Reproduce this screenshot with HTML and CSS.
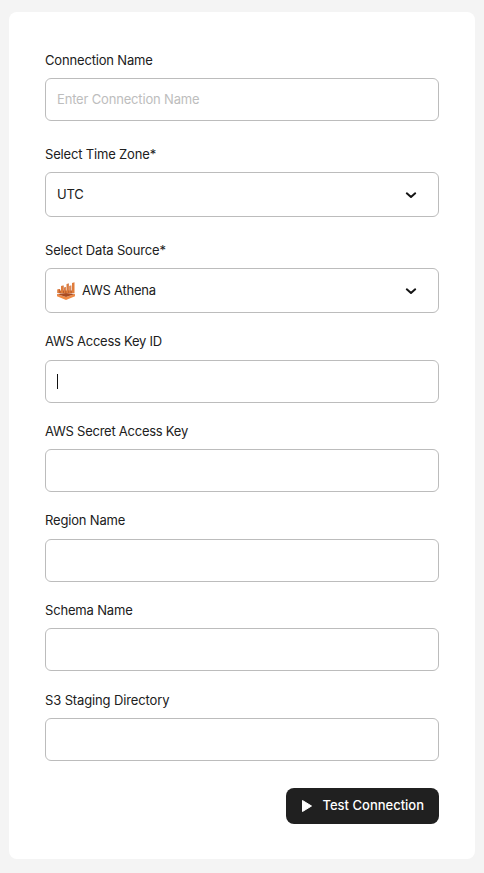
FILE: index.html
```html
<!DOCTYPE html>
<html lang="en">
<head>
<meta charset="utf-8">
<title>Connection</title>
<link rel="stylesheet" href="styles.css">
</head>
<body>
<form class="card">
  <div class="field name"><label>Connection Name</label><div class="control placeholder">Enter Connection Name</div></div>
  <div class="field zone"><label>Select Time Zone*</label><div class="control select"><span>UTC</span><svg class="chevron" viewBox="0 0 12 8"><path d="M1.8 2.3L6 6l4.2-3.7"/></svg></div></div>
  <div class="field source"><label>Select Data Source*</label><div class="control select"><svg class="athena" viewBox="0 0 18 18"><path fill="#f08a43" d="M0 12l9 3 9-3v2.2L9 18l-9-3.8z"/><path fill="#a94c22" d="M0 12l9-1 9 1-9 3z"/><path fill="#c96a31" d="M.5 7.5h2.5V11H.5zM3 8.5h12v2.8H3z"/><path fill="#e07c3a" d="M.5 7.5l2-.5v4h-2zM4 4l2-.5V11H4zM7 5.5L8.5 5v6H7zM9.5 2l2-.5V11h-2zM12.2 4l1.5-.5V11h-1.5zM15 1l2.5-.7v11L15 11z"/><path fill="#b85728" d="M2.5 7h.6v4h-.6zM6 3.5h.6V11H6zM8.5 5H9v6h-.5zM11.5 1.5h.5V11h-.5zM13.7 3.5h.6V11h-.6z"/></svg><span>AWS Athena</span><svg class="chevron" viewBox="0 0 12 8"><path d="M1.8 2.3L6 6l4.2-3.7"/></svg></div></div>
  <div class="field key"><label>AWS Access Key ID</label><div class="control"><span class="caret"></span></div></div>
  <div class="field secret"><label>AWS Secret Access Key</label><div class="control"></div></div>
  <div class="field region"><label>Region Name</label><div class="control"></div></div>
  <div class="field schema"><label>Schema Name</label><div class="control"></div></div>
  <div class="field directory"><label>S3 Staging Directory</label><div class="control"></div></div>
  <button class="test" type="button"><svg class="play" viewBox="0 0 12 14"><path d="M1.5 1.5l9 5.5-9 5.5z"/></svg><span>Test Connection</span></button>
</form>
</body>
</html>
```

FILE: styles.css
```css
* { box-sizing: border-box; }
body { margin: 0; height: 873px; padding: 12px 9px 14px; background: #f4f4f4; font: 13px/16px Inter, sans-serif; letter-spacing: -.17px; color: #202020; }
.card { height: 847px; padding: 40px 36px 0; border-radius: 8px; background: #fff; display: flex; flex-direction: column; }
.field { flex: none; }
label { display: block; height: 16px; margin-bottom: 10px; }
.control { height: 43px; border: 1px solid #bcbcbc; border-radius: 6px; padding: 0 11px 2px; display: flex; align-items: center; }
.select { height: 45px; padding-right: 21px; }
.placeholder { color: #bdbdbd; }
.name { height: 94px; }
.zone { height: 96px; }
.source { height: 91px; }
.key { height: 90px; }
.key label, .secret label { letter-spacing: -.25px; }
.key label, .region label { margin-bottom: 11px; }
.secret { height: 89px; }
.region, .schema { height: 90px; }
.directory { height: 96px; }
.directory label { letter-spacing: -.13px; }
.source .control span { letter-spacing: -.25px; }
.chevron { width: 12px; height: 8px; margin: 2px 0 0 auto; fill: none; stroke: #151515; stroke-width: 2; stroke-linecap: round; stroke-linejoin: round; }
.athena { width: 18px; height: 18px; margin: 2px 7px 0 0; }
.caret { width: 1px; height: 15px; margin-top: 2px; background: #111; }
.test { align-self: flex-end; width: 153px; height: 36px; border: 0; border-radius: 8px; background: #202020; color: #fff; font: 500 13px/16px Inter, sans-serif; letter-spacing: 0; display: flex; align-items: center; padding: 0 0 0 15px; }
.test span { margin-bottom: 2px; }
.play { width: 12px; height: 14px; margin-right: 9.5px; fill: #fff; stroke: #fff; stroke-linejoin: round; }
```
